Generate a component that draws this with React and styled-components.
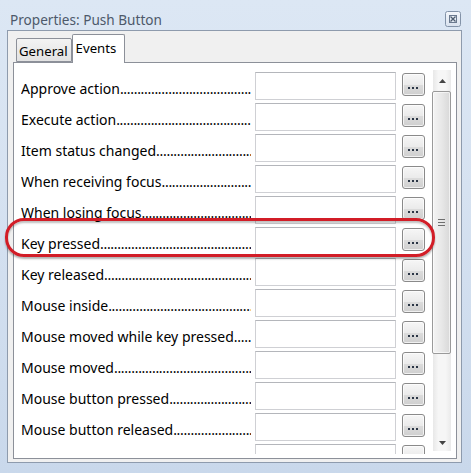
import React from "react";
import styled, { createGlobalStyle } from "styled-components";

const Global = createGlobalStyle`
  html, body { margin: 0; padding: 0; }
  body { background: #d3dfee; font-family: "Noto Sans", "Open Sans", sans-serif; }
`;

const Window = styled.div`
  position: relative;
  width: 471px;
  height: 473px;
  box-sizing: border-box;
  padding: 0 9px 10px 7px;
  display: flex;
  flex-direction: column;
  background: linear-gradient(to bottom, #dce7f4 0%, #d6e2f1 40%, #c9d8eb 100%);
  overflow: hidden;
`;

const TitleBar = styled.div`
  height: 30px;
  box-sizing: border-box;
  padding: 8px 1px 0 3px;
  display: flex;
  align-items: center;
  justify-content: space-between;
`;

const Title = styled.span`
  font-size: 13.6px;
  color: #4d596a;
  white-space: nowrap;
`;

const CloseBtn = styled.span`
  display: flex;
  width: 16px;
  height: 16px;
`;

const Client = styled.div`
  flex: 1;
  display: flex;
  flex-direction: column;
  background: #f0f0f0;
  border: 1px solid #8e9bad;
  padding: 3px 4px 3px 5px;
  min-height: 0;
`;

const Tabs = styled.div`
  display: flex;
  align-items: flex-end;
  height: 28px;
  padding-left: 3px;
  position: relative;
  z-index: 1;
`;

const Tab = styled.div`
  box-sizing: border-box;
  height: ${(p) => (p.$active ? "29px" : "24px")};
  margin-bottom: ${(p) => (p.$active ? "-1px" : "0")};
  padding: ${(p) => (p.$active ? "4px 8px 0 3px" : "3px 3px 0 2px")};
  border: 1px solid #8c9099;
  border-bottom: ${(p) => (p.$active ? "none" : "1px solid #8c9099")};
  border-radius: 2px 2px 0 0;
  background: ${(p) => (p.$active ? "#ffffff" : "linear-gradient(to bottom, #f3f3f3, #e2e2e2)")};
  font-size: 13.2px;
  color: #000;
  line-height: 18px;
  white-space: nowrap;
`;

const Panel = styled.div`
  flex: 1;
  min-height: 0;
  display: flex;
  background: #fff;
  border: 1px solid #8c9099;
  padding: 9px 5px 4px 7px;
`;

const List = styled.div`
  flex: 1;
  min-width: 0;
  overflow: hidden;
  display: flex;
  flex-direction: column;
  gap: 3px;
`;

const Row = styled.div`
  display: flex;
  align-items: center;
  height: 28px;
  flex-shrink: 0;
`;

const Label = styled.div`
  width: 230px;
  margin-right: 4px;
  display: flex;
  font-size: 14px;
  color: #000;
  white-space: nowrap;
  padding-top: 4px;
`;

const Dots = styled.span`
  flex: 1;
  overflow: hidden;
  letter-spacing: -0.3px;
`;

const TextBox = styled.div`
  width: 141px;
  height: 28px;
  box-sizing: border-box;
  border: 1px solid #cfd0d4;
  border-top-color: #b4b6bb;
  background: #fff;
  flex-shrink: 0;
`;

const DotButton = styled.div`
  width: 23px;
  height: 23px;
  box-sizing: border-box;
  margin-left: 6px;
  align-self: flex-start;
  margin-top: 1px;
  border: 1px solid #8a8a8a;
  border-radius: 3px;
  background: linear-gradient(to bottom, #f6f6f6 0%, #ebebeb 50%, #dcdcdc 51%, #cfcfcf 100%);
  box-shadow: inset 0 0 0 1px rgba(255, 255, 255, 0.7);
  display: flex;
  align-items: flex-end;
  justify-content: center;
  padding-bottom: 5px;
  flex-shrink: 0;
`;

const ScrollBar = styled.div`
  width: 18px;
  margin: -2px 0 3px 8px;
  display: flex;
  flex-direction: column;
  background: linear-gradient(to right, #e8e8e8, #f6f6f6 30%, #f6f6f6 70%, #eaeaea);
`;

const Arrow = styled.div`
  height: ${(p) => (p.$down ? "auto" : "21px")};
  flex: ${(p) => (p.$down ? "1" : "none")};
  display: flex;
  align-items: ${(p) => (p.$down ? "flex-end" : "center")};
  padding-bottom: ${(p) => (p.$down ? "6px" : "0")};
  justify-content: center;
`;

const Thumb = styled.div`
  height: 263px;
  margin-left: -1px;
  box-sizing: border-box;
  border: 1px solid #9a9a9a;
  border-radius: 2px;
  background: linear-gradient(to right, #f4f4f4, #e8e8e8 50%, #d8d8d8);
  box-shadow: inset 0 0 0 1px rgba(255, 255, 255, 0.6);
  display: flex;
  align-items: center;
  justify-content: center;
`;

const Highlight = styled.div`
  position: absolute;
  left: 5px;
  top: 218px;
  width: 430px;
  height: 39px;
  box-sizing: border-box;
  border: 3px solid #d21d27;
  border-radius: 19px;
  box-shadow: 0 2px 2px rgba(0, 0, 0, 0.3), inset 0 2px 2px rgba(0, 0, 0, 0.25);
  pointer-events: none;
`;

const labels = [
  "Approve action",
  "Execute action",
  "Item status changed",
  "When receiving focus",
  "When losing focus",
  "Key pressed",
  "Key released",
  "Mouse inside",
  "Mouse moved while key pressed",
  "Mouse moved",
  "Mouse button pressed",
  "Mouse button released",
  "Mouse outside",
];

const dots = ".".repeat(120);

function Ellipsis() {
  return (
    <svg width="11" height="3" viewBox="0 0 11 3">
      <rect x="0" y="0" width="2" height="2" fill="#2a3545" />
      <rect x="4" y="0" width="2" height="2" fill="#2a3545" />
      <rect x="8" y="0" width="2" height="2" fill="#2a3545" />
    </svg>
  );
}

export default function App() {
  return (
    <>
      <Global />
      <Window>
        <TitleBar>
          <Title>Properties: Push Button</Title>
          <CloseBtn>
            <svg width="16" height="16" viewBox="0 0 16 16">
              <defs>
                <linearGradient id="cb" x1="0" y1="0" x2="0" y2="1">
                  <stop offset="0" stopColor="#f4f7fb" />
                  <stop offset="1" stopColor="#d9e2ee" />
                </linearGradient>
              </defs>
              <rect x="0.5" y="0.5" width="15" height="15" rx="2" fill="url(#cb)" stroke="#8393a8" />
              <rect x="4.5" y="4.5" width="7" height="7" fill="none" stroke="#6b7a8f" />
              <path d="M5.5 5.5 L10.5 10.5 M10.5 5.5 L5.5 10.5" stroke="#4f5d70" strokeWidth="1.3" />
            </svg>
          </CloseBtn>
        </TitleBar>
        <Client>
          <Tabs>
            <Tab>General</Tab>
            <Tab $active>Events</Tab>
          </Tabs>
          <Panel>
            <List>
              {labels.map((l) => (
                <Row key={l}>
                  <Label>
                    <span>{l}</span>
                    <Dots>{dots}</Dots>
                  </Label>
                  <TextBox />
                  <DotButton>
                    <Ellipsis />
                  </DotButton>
                </Row>
              ))}
            </List>
            <ScrollBar>
              <Arrow>
                <svg width="7" height="4" viewBox="0 0 7 4">
                  <path d="M0 4 L3.5 0 L7 4 Z" fill="#444" />
                </svg>
              </Arrow>
              <Thumb>
                <svg width="7" height="7" viewBox="0 0 7 7">
                  <path d="M0 0.5 H7 M0 3.5 H7 M0 6.5 H7" stroke="#6f6f6f" strokeWidth="1" />
                </svg>
              </Thumb>
              <Arrow $down>
                <svg width="7" height="4" viewBox="0 0 7 4">
                  <path d="M0 0 L3.5 4 L7 0 Z" fill="#444" />
                </svg>
              </Arrow>
            </ScrollBar>
          </Panel>
        </Client>
        <Highlight />
      </Window>
    </>
  );
}
